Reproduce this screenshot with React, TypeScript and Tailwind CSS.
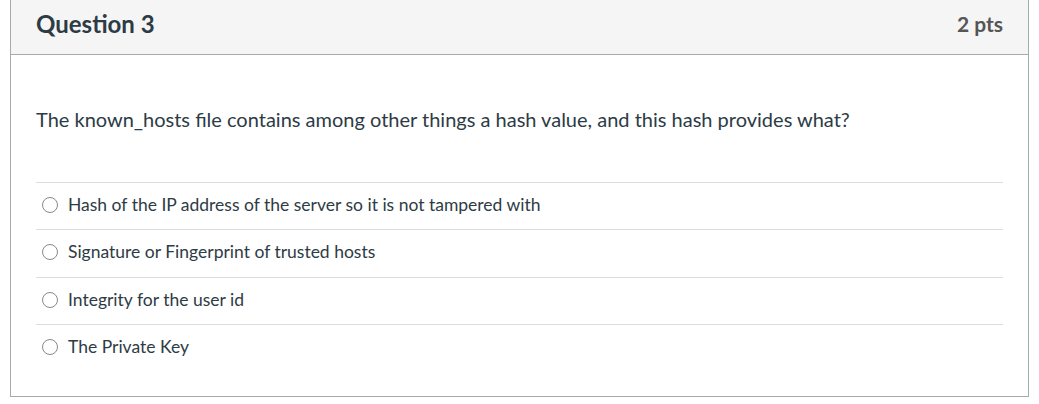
import React from 'react';

const answers = [
  'Hash of the IP address of the server so it is not tampered with',
  'Signature or Fingerprint of trusted hosts',
  'Integrity for the user id',
  'The Private Key',
];

export default function App() {
  return (
    <div className="h-[404px] w-[1039px] bg-white font-['Lato','Noto_Sans',sans-serif] text-[#2d3b45]">
      <div className="ml-[10px] w-[1019px] border-x border-b border-[#aaaaaa]">
        {/* header */}
        <div className="flex h-[55px] items-start justify-between border-b border-[#aaaaaa] bg-[#f5f5f5] px-[25px] pt-[12px]">
          <span className="text-[24px] font-bold leading-6">Question 3</span>
          <span className="text-[21px] font-bold leading-6 text-[#555]">2 pts</span>
        </div>

        {/* body */}
        <div className="px-[25px] pt-[52px] pb-[25px]">
          <p className="text-[20px] leading-6">
            The known_hosts file contains among other things a hash value, and this hash provides what?
          </p>
          <div className="mt-[51px]">
            {answers.map((a) => (
              <div key={a} className="flex items-center gap-[10px] border-t border-[#dddddd] pt-[10px] pb-[12.33px] pl-[6px]">
                <span className="h-[16px] w-[16px] rounded-full border border-[#888] bg-white" />
                <span className="text-[17.5px] leading-6">{a}</span>
              </div>
            ))}
          </div>
        </div>
      </div>
    </div>
  );
}
